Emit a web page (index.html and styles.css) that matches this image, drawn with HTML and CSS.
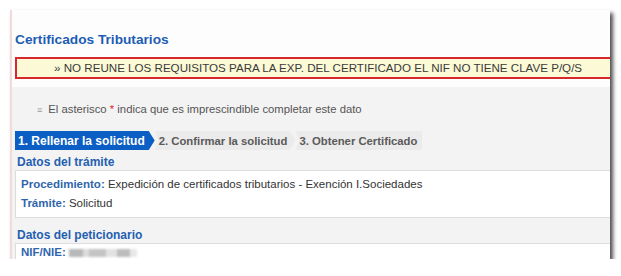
FILE: index.html
```html
<!DOCTYPE html>
<html lang="es">
<head>
    <meta charset="UTF-8">
    <title>Certificados Tributarios</title>
    <link rel="stylesheet" href="styles.css">
</head>
<body>
    <div class="frame">
        <h1 class="title">Certificados Tributarios</h1>
        <div class="alert">&raquo; NO REUNE LOS REQUISITOS PARA LA EXP. DEL CERTIFICADO EL NIF NO TIENE CLAVE P/Q/S</div>

        <div class="form-area">
            <p class="note"><span class="note-icon">&#8801;</span>El asterisco <span class="req">*</span> indica que es imprescindible completar este dato</p>

            <div class="steps">
                <div class="step step-active">1. Rellenar la solicitud</div>
                <div class="step">2. Confirmar la solicitud</div>
                <div class="step step-last">3. Obtener Certificado</div>
            </div>

            <h2 class="section-title">Datos del trámite</h2>
            <div class="box">
                <div class="row"><span class="label">Procedimiento:</span> Expedición de certificados tributarios - Exención I.Sociedades</div>
                <div class="row"><span class="label">Trámite:</span> Solicitud</div>
            </div>

            <h2 class="section-title">Datos del peticionario</h2>
            <div class="box box-short">
                <div class="row"><span class="label">NIF/NIE:</span> <span class="blurred"></span></div>
            </div>
        </div>
    </div>
</body>
</html>
```

FILE: styles.css
```css
/* Certificados - captura */
body {
    margin: 0;
    background-color: #ffffff;
    font-family: "Liberation Sans", Arial, sans-serif;
}

.frame {
    margin: 10px 0 0 10px;
    width: 598px;
    height: 249px;
    background-color: #fdfdfd;
    border-left: 2px solid #f1dada;
    box-shadow: 3px 3px 4px rgba(0, 0, 0, 0.7);
    overflow: hidden;
}

.title {
    margin: 0;
    padding: 22px 0 0 3px;
    font-size: 13.7px;
    line-height: 16px;
    color: #1d5db3;
}

.alert {
    margin: 9px 0 0 3px;
    height: 18px;
    line-height: 18px;
    padding-left: 37px;
    background-color: #fcf9d6;
    border: 2px solid #d9282c;
    border-right: none;
    font-size: 11.6px;
    color: #3a3a3a;
}

.form-area {
    margin-top: 8px;
    background-color: #f3f3f3;
    padding: 15px 0 0 3px;
    height: 200px;
}

.note {
    margin: 0;
    padding-left: 22px;
    font-size: 11.3px;
    line-height: 14px;
    color: #555555;
}

.note-icon {
    font-size: 9px;
    color: #999999;
    margin-right: 6px;
}

.req {
    color: #e0242a;
}

.steps {
    display: flex;
    margin-top: 14px;
    height: 19px;
}

.step {
    display: flex;
    align-items: center;
    padding: 0 8px 0 4px;
    background-color: #ebebeb;
    font-size: 11.3px;
    font-weight: bold;
    color: #5a5a5a;
    clip-path: polygon(0 0, calc(100% - 6px) 0, 100% 50%, calc(100% - 6px) 100%, 0 100%, 4px 50%);
}

.step-active {
    padding: 0 10px 0 3px;
    background-color: #0b5ec4;
    font-size: 12px;
    color: #ffffff;
    clip-path: polygon(0 0, calc(100% - 6px) 0, 100% 50%, calc(100% - 6px) 100%, 0 100%);
}

.step-last {
    padding-right: 5px;
    clip-path: polygon(0 0, 100% 0, 100% 100%, 0 100%, 4px 50%);
}

.section-title {
    margin: 5px 0 1px 2px;
    font-size: 12px;
    line-height: 14px;
    color: #2460b0;
}

.box {
    background-color: #ffffff;
    border: 1px solid #dddddd;
    border-right: none;
    padding: 4px 0 4px 5px;
    margin-bottom: 10px;
}

.box-short {
    padding-top: 1px;
}

.box-short .row {
    line-height: 14px;
}

.row {
    font-size: 11.5px;
    line-height: 19px;
    color: #333333;
}

.label {
    font-weight: bold;
    color: #2f65ad;
}

.blurred {
    display: inline-block;
    width: 68px;
    height: 8px;
    vertical-align: middle;
    background: linear-gradient(90deg, #b8b8b8 0 20%, #dcdcdc 20% 30%, #c4c4c4 30% 55%, #e2e2e2 55% 70%, #bdbdbd 70% 90%, #e8e8e8 90%);
    filter: blur(1.2px);
}
```
